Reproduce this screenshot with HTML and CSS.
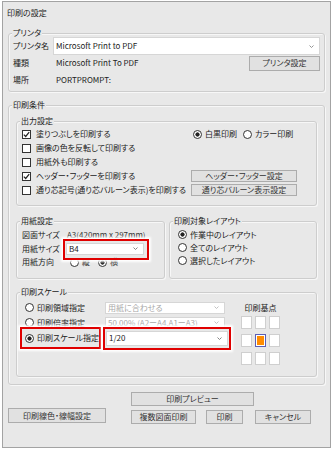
FILE: index.html
```html
<!DOCTYPE html>
<html lang="ja">
<head>
    <meta charset="UTF-8">
    <meta name="viewport" content="width=device-width, initial-scale=1.0">
    <title>印刷の設定</title>
    <link rel="stylesheet" href="styles.css">
</head>
<body>
    <div class="dialog">
        <div class="dialog-title">印刷の設定</div>

        <!-- プリンタ -->
        <section class="group printer-group">
            <div class="group-title">プリンタ</div>
            <div class="printer-grid">
                <span>プリンタ名</span>
                <div class="select printer-select">
                    <span>Microsoft Print to PDF</span>
                    <svg class="chev" width="5" height="3" viewBox="0 0 5 3"><path d="M0.5 0.5 L2.5 2.5 L4.5 0.5" fill="none" stroke="#888" stroke-width="0.9"/></svg>
                </div>
                <span>種類</span>
                <div class="info-row">
                    <span>Microsoft Print To PDF</span>
                    <button class="btn btn-printer">プリンタ設定</button>
                </div>
                <span>場所</span>
                <span class="info-value">PORTPROMPT:</span>
            </div>
        </section>

        <!-- 印刷条件 -->
        <section class="group cond-group">
            <div class="group-title">印刷条件</div>

            <section class="group output-group">
                <div class="group-title">出力設定</div>
                <div class="output-grid">
                    <label class="check"><span class="box"><svg width="7" height="7" viewBox="0 0 7 7"><path d="M0.8 3.6 L2.7 5.5 L6.2 1.2" fill="none" stroke="#222" stroke-width="1.2"/></svg></span>塗りつぶしを印刷する</label>
                    <div class="radio-pair">
                        <span class="radio"><span class="dot on"></span>白黒印刷</span>
                        <span class="radio"><span class="dot"></span>カラー印刷</span>
                    </div>
                    <label class="check"><span class="box"></span>画像の色を反転して印刷する</label>
                    <span></span>
                    <label class="check"><span class="box"></span>用紙外も印刷する</label>
                    <span></span>
                    <label class="check"><span class="box"><svg width="7" height="7" viewBox="0 0 7 7"><path d="M0.8 3.6 L2.7 5.5 L6.2 1.2" fill="none" stroke="#222" stroke-width="1.2"/></svg></span>ヘッダー・フッターを印刷する</label>
                    <button class="btn btn-small">ヘッダー・フッター設定</button>
                    <label class="check"><span class="box"></span>通り芯記号(通り芯バルーン表示)を印刷する</label>
                    <button class="btn btn-small">通り芯バルーン表示設定</button>
                </div>
            </section>

            <div class="paper-row">
                <section class="group paper-group">
                    <div class="group-title">用紙設定</div>
                    <div class="paper-grid">
                        <span>図面サイズ</span>
                        <span class="paper-value">A3(420mm x 297mm)</span>
                        <span>用紙サイズ</span>
                        <div class="select paper-select hl hl-paper">
                            <span>B4</span>
                            <svg class="chev" width="5" height="3" viewBox="0 0 5 3"><path d="M0.5 0.5 L2.5 2.5 L4.5 0.5" fill="none" stroke="#777" stroke-width="0.9"/></svg>
                        </div>
                        <span>用紙方向</span>
                        <div class="orient">
                            <span class="radio"><span class="dot"></span>縦</span>
                            <span class="radio"><span class="dot on"></span>横</span>
                        </div>
                    </div>
                </section>

                <section class="group layout-group">
                    <div class="group-title">印刷対象レイアウト</div>
                    <div class="layout-list">
                        <span class="radio"><span class="dot on"></span>作業中のレイアウト</span>
                        <span class="radio"><span class="dot"></span>全てのレイアウト</span>
                        <span class="radio"><span class="dot"></span>選択したレイアウト</span>
                    </div>
                </section>
            </div>

            <section class="group scale-group">
                <div class="group-title">印刷スケール</div>
                <div class="scale-body">
                    <div class="scale-options">
                        <span class="radio"><span class="dot"></span>印刷領域指定</span>
                        <div class="select select-off">
                            <span>用紙に合わせる</span>
                            <svg class="chev" width="5" height="3" viewBox="0 0 5 3"><path d="M0.5 0.5 L2.5 2.5 L4.5 0.5" fill="none" stroke="#bbb" stroke-width="0.9"/></svg>
                        </div>
                        <span class="radio"><span class="dot"></span>印刷倍率指定</span>
                        <div class="select select-off">
                            <span>50.00% (A2ーA4,A1ーA3)</span>
                            <svg class="chev" width="5" height="3" viewBox="0 0 5 3"><path d="M0.5 0.5 L2.5 2.5 L4.5 0.5" fill="none" stroke="#bbb" stroke-width="0.9"/></svg>
                        </div>
                        <span class="radio radio-cell hl hl-radio"><span class="dot on"></span>印刷スケール指定</span>
                        <div class="select scale-select hl hl-scale">
                            <span>1/20</span>
                            <svg class="chev" width="5" height="3" viewBox="0 0 5 3"><path d="M0.5 0.5 L2.5 2.5 L4.5 0.5" fill="none" stroke="#777" stroke-width="0.9"/></svg>
                        </div>
                    </div>
                    <div class="origin">
                        <div class="origin-title">印刷基点</div>
                        <div class="origin-grid">
                            <span class="cell"></span><span class="cell"></span><span class="cell"></span>
                            <span class="cell"></span><span class="cell cell-on"><span></span></span><span class="cell"></span>
                            <span class="cell"></span><span class="cell"></span><span class="cell"></span>
                        </div>
                    </div>
                </div>
            </section>
        </section>

        <div class="actions">
            <button class="btn btn-linecolor">印刷線色・線幅設定</button>
            <div class="action-col">
                <button class="btn btn-preview">印刷プレビュー</button>
                <div class="action-row">
                    <button class="btn btn-multi">複数図面印刷</button>
                    <button class="btn btn-print">印刷</button>
                    <button class="btn btn-cancel">キャンセル</button>
                </div>
            </div>
        </div>
    </div>
</body>
</html>
```

FILE: styles.css
```css
* {
    margin: 0;
    padding: 0;
    box-sizing: border-box;
}

body {
    background: #fff;
    font-family: "Noto Sans CJK JP", sans-serif;
    font-size: 8px;
    line-height: 10px;
    color: #222;
    font-feature-settings: "palt" 1;
}

.dialog {
    width: 329px;
    height: 447px;
    margin: 1px 0 0 2px;
    padding: 6px 5px 0 5px;
    border: 1px solid #a3a3a3;
    background: #e8e8e8;
}

.dialog-title {
    margin-left: -1px;
}

/* group boxes */
.group {
    border: 1px solid #cdcdcd;
    border-radius: 3px;
    box-shadow: inset 1px 1px 0 #f7f7f7, 1px 1px 0 #f7f7f7;
}

.group-title {
    width: fit-content;
    margin: -5px 0 0 -2px;
    padding: 0 1px;
    line-height: 8px;
    background: #e8e8e8;
    white-space: nowrap;
}

/* select / button */
.select {
    display: flex;
    align-items: center;
    justify-content: space-between;
    background: #fff;
    border: 1px solid #d6d6d6;
    padding: 0 5px 0 2px;
    white-space: nowrap;
}

.select-off {
    color: #a8a8a8;
}

.btn {
    display: flex;
    align-items: center;
    justify-content: center;
    font: inherit;
    line-height: 10px;
    color: #333;
    background: #e1e1e1;
    border: 1px solid #acacac;
    white-space: nowrap;
}

/* check / radio */
.check {
    display: flex;
    align-items: center;
    gap: 5px;
    white-space: nowrap;
}

.box {
    width: 9px;
    height: 9px;
    flex: none;
    display: flex;
    border: 1px solid #333;
    background: #fff;
}

.radio {
    display: inline-flex;
    align-items: center;
    gap: 3px;
    white-space: nowrap;
}

.dot {
    width: 9px;
    height: 9px;
    flex: none;
    border: 1px solid #333;
    border-radius: 50%;
    background: #fff;
}

.dot.on {
    background: radial-gradient(circle, #222 0 1.8px, #fff 2.4px);
}

/* red annotation boxes */
.hl {
    position: relative;
}

.hl::after {
    content: "";
    position: absolute;
    border: 2px solid #e00000;
    box-shadow: 0 0 2px 2px rgba(255, 255, 255, 0.95);
    pointer-events: none;
}

.hl-paper::after {
    inset: -5px -6px -6px -4px;
}

.hl-radio::after {
    inset: -3px 4px -3px -5px;
}

.hl-scale::after {
    inset: -5px -4px -5px -4px;
}

/* プリンタ */
.printer-group {
    margin-top: 15px;
    padding: 0 4px 2px 4px;
}

.printer-group > .group-title {
    margin-left: -1px;
}

.printer-grid {
    display: grid;
    grid-template-columns: 40px 1fr;
    grid-template-rows: 18px 16px 18px;
    align-items: center;
}

.printer-select {
    height: 18px;
}

.info-row {
    display: flex;
    align-items: center;
    justify-content: space-between;
    padding-left: 3px;
}

.info-value {
    padding-left: 3px;
}

.btn-printer {
    width: 71px;
    height: 15px;
}

/* 印刷条件 */
.cond-group {
    margin-top: 13px;
    padding: 0 7px 7px 7px;
}

.cond-group > .group-title {
    margin-left: -4px;
}

.output-group {
    margin-top: 12px;
    padding: 0 5px 8px 5px;
}

.output-grid {
    display: grid;
    grid-template-columns: 169px 106px;
    grid-auto-rows: 14px;
    align-items: center;
    padding-top: 2px;
}

.radio-pair {
    display: flex;
    gap: 6px;
    margin-left: 2px;
}

.btn-small {
    height: 12px;
}

.paper-row {
    display: grid;
    grid-template-columns: 149px 148px;
    column-gap: 4px;
    margin-top: 15px;
}

.paper-group {
    padding: 0 5px 9px 5px;
}

.paper-grid {
    display: grid;
    grid-template-columns: 44px 1fr;
    grid-template-rows: 14px 13px 14px;
    align-items: center;
    padding-top: 3px;
}

.paper-value {
    padding-left: 1px;
    white-space: nowrap;
    color: #333;
}

.paper-select {
    width: 78px;
    height: 12px;
}

.orient {
    display: flex;
    gap: 8px;
    padding-left: 4px;
}

.layout-group {
    padding: 0 5px 0 5px;
}

.layout-list {
    display: grid;
    grid-auto-rows: 13px;
    align-items: center;
    padding: 3px 0 0 3px;
}

/* 印刷スケール */
.scale-group {
    margin-top: 13px;
    padding: 0 5px 11px 5px;
}

.scale-body {
    display: flex;
    padding-top: 4px;
}

.scale-options {
    display: grid;
    grid-template-columns: 80px 123px;
    grid-template-rows: 15px 15px 16px;
    align-items: center;
    margin-left: 3px;
}

.scale-options .select-off {
    width: 120px;
    height: 12px;
}

.radio-cell {
    align-self: stretch;
}

.scale-select {
    width: 122px;
    height: 15px;
    margin-left: 1px;
}

.origin {
    width: 39px;
    margin-left: 13px;
}

.origin-title {
    line-height: 15px;
    text-align: center;
    white-space: nowrap;
}

.origin-grid {
    display: grid;
    grid-template-columns: repeat(3, 11px);
    grid-auto-rows: 13px;
    column-gap: 3px;
    row-gap: 5px;
    margin-top: 1px;
}

.cell {
    background: #fff;
    border: 1px solid #cfcfcf;
}

.cell-on {
    display: flex;
    padding: 1px;
    border-color: #5b5fb5;
}

.cell-on span {
    flex: 1;
    background: #ff8c00;
}

/* bottom buttons */
.actions {
    display: flex;
    margin-top: 7px;
}

.btn-linecolor {
    width: 98px;
    height: 15px;
    margin-top: 16px;
}

.action-col {
    display: flex;
    flex-direction: column;
    gap: 4px;
    margin-left: 25px;
}

.btn-preview {
    width: 123px;
    height: 14px;
}

.action-row {
    display: flex;
}

.btn-multi {
    width: 65px;
    height: 14px;
}

.btn-print {
    width: 37px;
    height: 14px;
    margin-left: 10px;
}

.btn-cancel {
    width: 56px;
    height: 14px;
    margin-left: 12px;
}
```
